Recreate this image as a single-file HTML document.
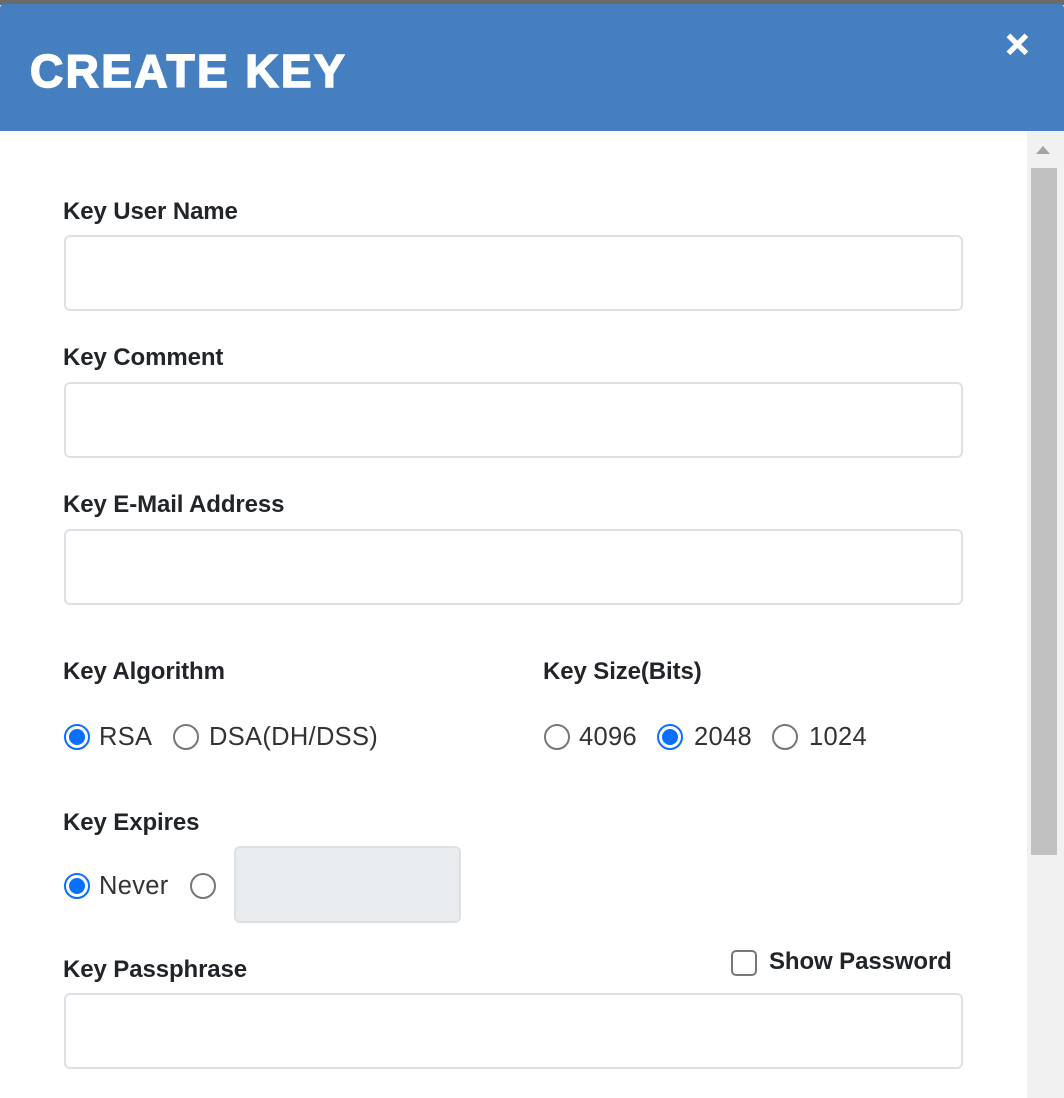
<!DOCTYPE html>
<html><head><style>
*{margin:0;padding:0;box-sizing:border-box}
body{width:1064px;height:1098px;overflow:hidden;background:#fff;font-family:"Liberation Sans",Arial,sans-serif;position:relative}
.top{position:absolute;left:0;top:0;width:1064px;height:5px;background:#6b6b6b}
.hdr{position:absolute;left:0;top:4px;width:1064px;height:127px;background:#457fbf;border-radius:4px 4px 0 0}
.title{position:absolute;left:30px;top:38px;color:#fff;font-weight:900;font-size:46px;letter-spacing:2.4px;-webkit-text-stroke:1.6px #fff;line-height:58px}
.close{position:absolute;left:1004px;top:24px;color:#fff;font-size:32px;font-weight:bold;line-height:34px;-webkit-text-stroke:1px #fff}
.lbl{position:absolute;font-weight:bold;font-size:24px;color:#212529;line-height:26px;letter-spacing:-0.1px}
.inp{position:absolute;left:64px;width:899px;height:76px;border:2px solid #dde1e6;border-radius:6px;background:#fff}
.r{position:absolute;width:26px;height:26px;border-radius:50%;border:2px solid #777}
.r.on{border:2px solid #0d6efd;background:#fff}
.r.on::after{content:"";position:absolute;left:3px;top:3px;width:16px;height:16px;border-radius:50%;background:#0b6ffd}
.t{position:absolute;font-size:25.5px;color:#333;line-height:28px;letter-spacing:0.3px}
.sb{position:absolute;left:1027px;top:131px;width:37px;height:967px;background:#f1f1f1}
.th{position:absolute;left:1031px;top:168px;width:26px;height:687px;background:#c1c1c1}
.arr{position:absolute;left:1036px;top:146px;width:0;height:0;border-left:7px solid transparent;border-right:7px solid transparent;border-bottom:8px solid #a3a3a3}
</style></head><body>
<div class="top"></div>
<div class="hdr"><div class="title">CREATE KEY</div><div class="close">✕</div></div>
<div class="sb"></div><div class="th"></div><div class="arr"></div>

<div class="lbl" style="left:63px;top:199px">Key User Name</div>
<div class="inp" style="top:235px"></div>
<div class="lbl" style="left:63px;top:345px">Key Comment</div>
<div class="inp" style="top:382px"></div>
<div class="lbl" style="left:63px;top:492px">Key E-Mail Address</div>
<div class="inp" style="top:529px"></div>

<div class="lbl" style="left:63px;top:659px">Key Algorithm</div>
<div class="lbl" style="left:543px;top:659px">Key Size(Bits)</div>
<div class="r on" style="left:64px;top:724px"></div><div class="t" style="left:99px;top:723px">RSA</div>
<div class="r" style="left:173px;top:724px"></div><div class="t" style="left:209px;top:723px">DSA(DH/DSS)</div>
<div class="r" style="left:544px;top:724px"></div><div class="t" style="left:579px;top:723px">4096</div>
<div class="r on" style="left:657px;top:724px"></div><div class="t" style="left:694px;top:723px">2048</div>
<div class="r" style="left:772px;top:724px"></div><div class="t" style="left:809px;top:723px">1024</div>

<div class="lbl" style="left:63px;top:810px">Key Expires</div>
<div class="r on" style="left:64px;top:873px"></div><div class="t" style="left:99px;top:872px">Never</div>
<div class="r" style="left:190px;top:873px"></div>
<div style="position:absolute;left:234px;top:846px;width:227px;height:77px;background:#e9ecef;border:2px solid #dde1e6;border-radius:6px"></div>

<div class="lbl" style="left:63px;top:957px">Key Passphrase</div>
<div style="position:absolute;left:731px;top:950px;width:26px;height:26px;border:2px solid #777;border-radius:5px"></div>
<div class="lbl" style="left:769px;top:949px">Show Password</div>
<div class="inp" style="top:993px"></div>
</body></html>
